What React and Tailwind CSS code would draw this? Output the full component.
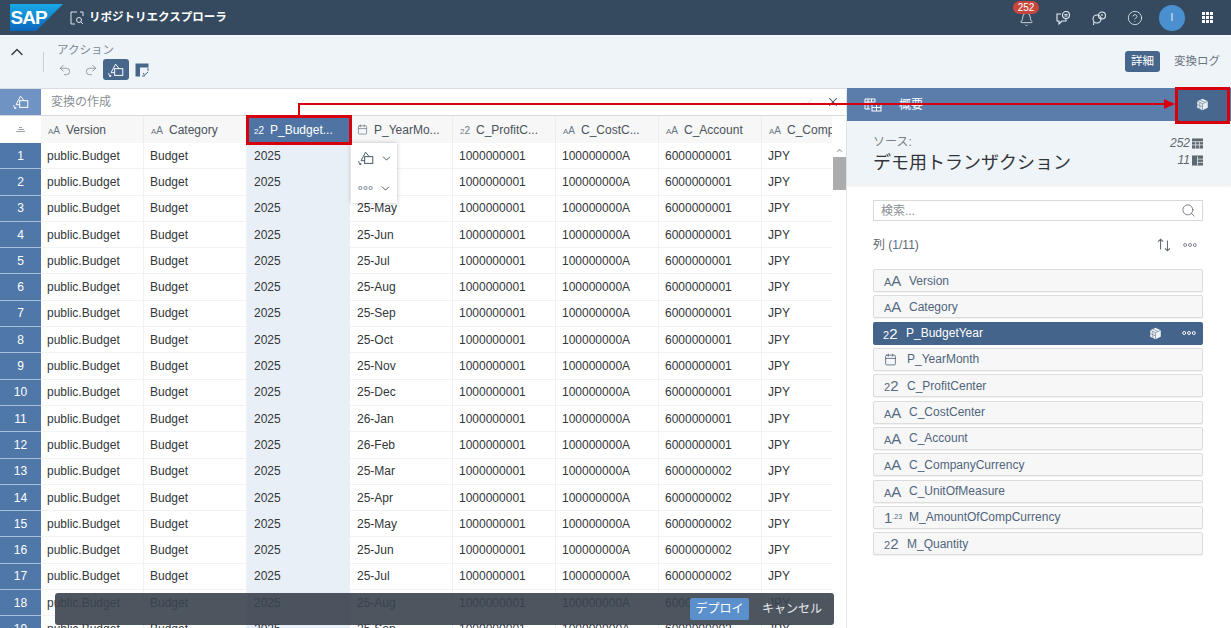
import React from 'react';
import { Bell, Calendar, Check, ChevronDown, ChevronUp, CircleHelp, Redo2, Search, Undo2, X } from 'lucide-react';

const months = ['25-Mar', '25-Apr', '25-May', '25-Jun', '25-Jul', '25-Aug', '25-Sep', '25-Oct', '25-Nov', '25-Dec', '26-Jan', '26-Feb', '25-Mar', '25-Apr', '25-May', '25-Jun', '25-Jul', '25-Aug', '25-Sep'];

const headers = [
    { type: 'text', label: 'Version' },
    { type: 'text', label: 'Category' },
    { type: 'int', label: 'P_Budget...', active: true },
    { type: 'date', label: 'P_YearMo...' },
    { type: 'int', label: 'C_ProfitC...' },
    { type: 'text', label: 'C_CostC...' },
    { type: 'text', label: 'C_Account' },
    { type: 'text', label: 'C_Compa...' },
];

const columns = [
    { type: 'text', label: 'Version' },
    { type: 'text', label: 'Category' },
    { type: 'int', label: 'P_BudgetYear', active: true },
    { type: 'date', label: 'P_YearMonth' },
    { type: 'int', label: 'C_ProfitCenter' },
    { type: 'text', label: 'C_CostCenter' },
    { type: 'text', label: 'C_Account' },
    { type: 'text', label: 'C_CompanyCurrency' },
    { type: 'text', label: 'C_UnitOfMeasure' },
    { type: 'num', label: 'M_AmountOfCompCurrency' },
    { type: 'int', label: 'M_Quantity' },
];

const TransformIcon = ({ className }) => (
    <svg viewBox="0 0 20 20" fill="none" stroke="currentColor" strokeWidth="1.1" className={className}>
        <rect x="8.5" y="8.5" width="9" height="7.5" />
        <path d="M8.5 13 H4.5 L9.5 3.5 L13.5 8.5" />
        <path d="M2 13.5 C1.8 15 2.5 16.3 4 17 M2.4 16.8 L4.2 17.2 L4.2 15.4" />
    </svg>
);

const CubeIcon = ({ className }) => (
    <svg viewBox="0 0 16 16" className={className}>
        <path d="M8 1 L14.5 4 V12 L8 15 L1.5 12 V4 Z" fill="currentColor" />
        <path d="M1.5 4 L8 7 L14.5 4 M8 7 V15 M4.7 2.5 L11.2 5.5 M4.7 5.5 V13.5 M1.5 8 L8 11" stroke="#5a6d84" strokeWidth="0.7" fill="none" />
    </svg>
);

const Dots = ({ className }) => (
    <svg viewBox="0 0 16 6" fill="none" stroke="currentColor" strokeWidth="1.1" className={className}>
        <circle cx="2.5" cy="3" r="1.7" />
        <circle cx="8" cy="3" r="1.7" />
        <circle cx="13.5" cy="3" r="1.7" />
    </svg>
);

const SapLogo = () => (
    <svg viewBox="0 0 53 27" className="w-[53px] h-[27px]">
        <defs>
            <linearGradient id="sap" x1="0" y1="0" x2="0" y2="1">
                <stop offset="0" stopColor="#19a9e6" />
                <stop offset="1" stopColor="#0a66bd" />
            </linearGradient>
        </defs>
        <path d="M0 0 H53 L26 27 H0 Z" fill="url(#sap)" />
        <text x="0.5" y="20" fill="#fff" fontSize="19" fontWeight="700" fontFamily="Liberation Sans, sans-serif" letterSpacing="-1">SAP</text>
    </svg>
);

const TypeMark = ({ type, large }) => {
    if (type === 'date') return <Calendar className={large ? 'w-[13px] h-[13px]' : 'w-[11px] h-[11px]'} strokeWidth={1.6} />;
    if (type === 'num') return <span className="text-[15px] leading-none">1<sup className="text-[7px]">.23</sup></span>;
    if (type === 'int') return <span className={large ? 'text-[15px] leading-none' : 'text-[10px] leading-none'}><span className={large ? 'text-[11px]' : 'text-[8px]'}>2</span>2</span>;
    return <span className={large ? 'text-[15px] leading-none' : 'text-[10px] leading-none'}><span className={large ? 'text-[11px]' : 'text-[8px]'}>A</span>A</span>;
};

const Row = ({ n, month }) => (
    <div className="flex h-[26.3px] shrink-0 text-[12px] text-[#32363a]">
        <div className="w-[41px] shrink-0 bg-[#4f78a8] border-b border-[#a9c1de] flex items-center justify-center text-white">{n}</div>
        <div className="w-[103px] shrink-0 border-r border-b border-[#f0f2f4] px-[6px] flex items-center">public.Budget</div>
        <div className="w-[103px] shrink-0 border-r border-b border-[#f0f2f4] px-[6px] flex items-center">Budget</div>
        <div className="w-[103px] shrink-0 bg-[#e9eff6] border-b border-[#e9eff6] px-[7px] flex items-center">2025</div>
        <div className="w-[103px] shrink-0 border-r border-b border-[#f0f2f4] px-[7px] flex items-center">{month}</div>
        <div className="w-[103px] shrink-0 border-r border-b border-[#f0f2f4] px-[6px] flex items-center">1000000001</div>
        <div className="w-[103px] shrink-0 border-r border-b border-[#f0f2f4] px-[6px] flex items-center">100000000A</div>
        <div className="w-[103px] shrink-0 border-r border-b border-[#f0f2f4] px-[6px] flex items-center">{n > 12 ? '6000000002' : '6000000001'}</div>
        <div className="w-[70px] shrink-0 border-b border-[#f0f2f4] px-[6px] flex items-center">JPY</div>
    </div>
);

const App = () => {
    return (
        <div className="relative w-[1231px] h-[628px] overflow-hidden bg-white flex flex-col font-['Liberation_Sans','Noto_Sans_CJK_JP',sans-serif]">
            {/* Shell bar */}
            <div className="h-[35px] shrink-0 bg-[#354a5f] flex items-center pl-[10px] pr-[18px] text-white">
                <SapLogo />
                <svg viewBox="0 0 14 14" fill="none" stroke="#dfe5ec" strokeWidth="1" className="w-[14px] h-[14px] ml-[7px]">
                    <path d="M7 1 H1 V13 H5 M10 1 H13 V5" />
                    <circle cx="9" cy="9" r="2.5" />
                    <path d="M11 11 L13 13" />
                </svg>
                <span className="ml-[5px] text-[11.5px] font-semibold">リポジトリエクスプローラ</span>
                <div className="ml-auto flex items-center text-[#e8edf3]">
                    <div className="relative w-[16px] flex justify-center">
                        <Bell className="w-[15px] h-[15px] translate-y-[2px]" strokeWidth={1.3} />
                        <span className="absolute -top-[9px] left-[-5px] w-[26px] h-[13px] rounded-full bg-[#c8473c] text-white text-[10px] leading-[13px] text-center">252</span>
                    </div>
                    <svg viewBox="0 0 16 16" fill="none" stroke="currentColor" strokeWidth="1.1" className="w-[16px] h-[16px] ml-[21px]">
                        <path d="M6 4 H2 V11 H4 V14 L7 11 H11 V9" />
                        <circle cx="11" cy="5" r="3.5" />
                        <path d="M9.5 4.5 H12.5 M9.5 6 H12.5" />
                    </svg>
                    <svg viewBox="0 0 16 16" fill="none" stroke="currentColor" strokeWidth="1.1" className="w-[16px] h-[16px] ml-[20px]">
                        <circle cx="6" cy="9" r="4" />
                        <circle cx="11" cy="5.5" r="3.5" />
                        <path d="M3 12 L2.5 15 M11 4 V6 M11 7 V7.5" />
                    </svg>
                    <CircleHelp className="w-[16px] h-[16px] ml-[20px]" strokeWidth={1.2} />
                    <div className="w-[26px] h-[26px] rounded-full bg-[#4a90d0] ml-[16px] flex items-center justify-center text-[10px]">I</div>
                    <div className="grid grid-cols-3 gap-[1px] ml-[17px]">
                        {Array.from({ length: 9 }).map((_, i) => <span key={i} className="w-[3px] h-[3px] bg-white" />)}
                    </div>
                </div>
            </div>

            {/* Action toolbar */}
            <div className="h-[53px] shrink-0 bg-[#eff4f9] border-t border-[#f7f9fb] flex items-start">
                <ChevronUp className="w-[20px] h-[20px] text-[#32363a] mt-[6px] ml-[7px]" strokeWidth={1.6} />
                <div className="w-px h-[20px] bg-[#c9d0d8] mt-[16px] ml-[16px]" />
                <div className="ml-[13px] mt-[6px]">
                    <div className="text-[11.5px] leading-[16px] text-[#7c8792]">アクション</div>
                    <div className="flex items-center mt-[1px]">
                        <Undo2 className="w-[14px] h-[14px] text-[#7f8b98] ml-[1px]" strokeWidth={1.4} />
                        <Redo2 className="w-[14px] h-[14px] text-[#7f8b98] ml-[12px]" strokeWidth={1.4} />
                        <div className="w-[26px] h-[21px] rounded-[3px] bg-[#46668c] ml-[5px] flex items-center justify-center text-white">
                            <TransformIcon className="w-[18px] h-[18px]" />
                        </div>
                        <svg viewBox="0 0 14 14" className="w-[14px] h-[14px] ml-[6px]">
                            <rect x="0.5" y="0.5" width="4.5" height="13" fill="#46668c" />
                            <rect x="5" y="0.5" width="8.5" height="4" fill="#46668c" />
                            <path d="M13 5 V8 M7 13 H10 M8 10 L9.5 12 L13 9" fill="none" stroke="#46668c" strokeWidth="1" />
                        </svg>
                    </div>
                </div>
                <div className="ml-auto mt-[15px] mr-[11px] flex items-center text-[11.5px]">
                    <span className="w-[35px] h-[21px] rounded-[3px] bg-[#46668c] text-white flex items-center justify-center">詳細</span>
                    <span className="ml-[14px] text-[#6a7580]">変換ログ</span>
                </div>
            </div>

            <div className="flex flex-1 min-h-0">
                {/* Data grid */}
                <div className="relative w-[846px] shrink-0 flex flex-col overflow-hidden border-t border-[#d8dde3]">
                    <div className="h-[27px] shrink-0 flex items-center border-b border-[#d9d9d9]">
                        <div className="w-[41px] h-full bg-[#6f94c4] flex items-center justify-center text-white">
                            <TransformIcon className="w-[18px] h-[18px]" />
                        </div>
                        <span className="ml-[10px] text-[12px] text-[#8a8f95]">変換の作成</span>
                        <Check className="w-[13px] h-[13px] ml-auto text-[#c5cbd2]" strokeWidth={1.2} />
                        <X className="w-[14px] h-[14px] ml-[12px] mr-[6px] text-[#3f4d5c]" strokeWidth={1.8} />
                    </div>
                    <div className="flex h-[27px] shrink-0 text-[12px] text-[#4a525a]">
                        <div className="w-[41px] shrink-0 flex flex-col items-center justify-center gap-[1px]">
                            <span className="w-[3px] h-px bg-[#9aa3ad]" />
                            <span className="w-[6px] h-px bg-[#9aa3ad]" />
                            <span className="w-[9px] h-px bg-[#9aa3ad]" />
                        </div>
                        {headers.map((h) => (
                            <div key={h.label} className={`w-[103px] shrink-0 flex items-center gap-[6px] pl-[7px] whitespace-nowrap ${h.active ? 'bg-[#4f74a4] text-white' : 'bg-[#f7f7f7] border-r border-[#ececec]'}`}>
                                <span className={h.active ? 'text-white' : 'text-[#6a7886]'}><TypeMark type={h.type} /></span>
                                {h.label}
                            </div>
                        ))}
                    </div>
                    {months.map((m, i) => <Row key={i} n={i + 1} month={m} />)}

                    {/* Grid scrollbar */}
                    <div className="absolute right-0 top-[27px] bottom-0 w-[14px] bg-white flex flex-col items-center">
                        <ChevronUp className="w-[9px] h-[9px] mt-[30px] text-[#b5b5b5]" strokeWidth={3} />
                        <div className="w-[13px] h-[33px] bg-[#acacac] mt-[2px]" />
                    </div>

                    {/* Column popover */}
                    <div className="absolute left-[351px] top-[54px] w-[46px] h-[60px] bg-white shadow-[0_0_4px_rgba(0,0,0,0.25)] flex flex-col text-[#46586c]">
                        <div className="flex-1 flex items-center pl-[6px] gap-[5px]">
                            <TransformIcon className="w-[18px] h-[18px]" />
                            <ChevronDown className="w-[13px] h-[13px]" strokeWidth={1.8} />
                        </div>
                        <div className="flex-1 flex items-center pl-[7px] gap-[6px]">
                            <Dots className="w-[15px] h-[6px] text-[#8b95a1]" />
                            <ChevronDown className="w-[13px] h-[13px]" strokeWidth={1.8} />
                        </div>
                    </div>

                    {/* Deploy toast */}
                    <div className="absolute left-[55px] top-[504px] w-[779px] h-[32px] rounded-[3px] bg-[#3a424e]/90 flex items-center justify-end pr-[5px] text-[12px] text-[#e6e9ed]">
                        <span className="w-[59px] h-[22px] rounded-[2px] bg-[#5a90cc] text-white flex items-center justify-center">デプロイ</span>
                        <span className="ml-[13px] mr-[7px]">キャンセル</span>
                    </div>
                </div>

                {/* Source panel */}
                <div className="flex-1 flex flex-col border-l border-[#e4e7ea]">
                    <div className="h-[33px] shrink-0 bg-[#5a7dab] flex items-stretch text-white">
                        <svg viewBox="0 0 18 14" fill="none" stroke="currentColor" strokeWidth="1" className="w-[18px] h-[14px] ml-[17px] self-center">
                            <path d="M1 1 H11 V4 H1 Z M1 4 V11 H6 M4 1 V11 M7.5 1 V4" />
                            <rect x="8" y="6" width="9" height="7" />
                            <path d="M8 9.5 H17 M12.5 6 V13" />
                        </svg>
                        <span className="ml-[17px] text-[12px] self-center leading-[14px]">概要</span>
                        <div className="ml-auto w-[54px] mr-[2px] bg-[#47678f] flex items-center justify-center">
                            <CubeIcon className="w-[13px] h-[13px] text-[#e8edf3]" />
                        </div>
                    </div>
                    <div className="h-[64px] shrink-0 bg-[#eff4f9] flex pl-[26px] pr-[28px] shadow-[0_1px_2px_rgba(0,0,0,0.08)]">
                        <div className="flex-1 pt-[13px]">
                            <div className="text-[12px] leading-[16px] text-[#7a8189]">ソース:</div>
                            <div className="text-[18px] leading-[24px] mt-[1px] text-[#32363a]">デモ用トランザクション</div>
                        </div>
                        <div className="pt-[15px] text-[12px] italic text-[#5f6770] flex flex-col items-end gap-[3px] leading-[14px]">
                            <div className="flex items-center gap-[2px]">252
                                <svg viewBox="0 0 12 11" className="w-[11px] h-[11px]"><rect width="12" height="11" fill="#5f6770" /><path d="M0 3.5 H12 M0 7 H12 M4 3.5 V11 M8 3.5 V11" stroke="#eff4f9" strokeWidth="0.8" /></svg>
                            </div>
                            <div className="flex items-center gap-[2px]">11
                                <svg viewBox="0 0 12 11" className="w-[11px] h-[11px]"><rect width="12" height="11" fill="#5f6770" /><path d="M6 1 V11 M6 4 H12 M6 7.5 H12" stroke="#eff4f9" strokeWidth="0.8" /></svg>
                            </div>
                        </div>
                    </div>
                    <div className="pt-[15px] pl-[26px] pr-[28px]">
                        <div className="h-[21px] border border-[#d9d9d9] bg-white flex items-center px-[7px] text-[12px] text-[#8a8f95]">
                            検索...
                            <Search className="w-[15px] h-[15px] ml-auto text-[#5f6770] -mr-[1px]" strokeWidth={1.3} />
                        </div>
                        <div className="flex items-center h-[18px] mt-[15px] text-[12px] text-[#5f6770]">
                            <span>列 (<span className="text-[#4f74a4]">1</span>/11)</span>
                            <svg viewBox="0 0 14 14" fill="none" stroke="currentColor" strokeWidth="0.9" className="w-[16px] h-[16px] ml-auto">
                                <path d="M4 11 V2 M1.8 4 L4 2 L6.2 4 M10 3 V12 M7.8 10 L10 12 L12.2 10" />
                            </svg>
                            <Dots className="w-[14px] h-[6px] ml-[11px] mr-[6px] text-[#7a8189]" />
                        </div>
                        <div className="flex flex-col gap-[3.33px] mt-[15px]">
                            {columns.map((c) => (
                                <div key={c.label} className={`h-[23px] rounded-[2px] flex items-center text-[12px] ${c.active ? 'bg-[#44648c] text-white' : 'bg-[#f7f7f7] border border-[#dcdcdc] shadow-[0_1px_1px_rgba(0,0,0,0.06)] text-[#50657c]'}`}>
                                    <span className={`ml-[10px] flex justify-start ${c.type === 'text' || c.type === 'num' ? 'w-[25px]' : 'w-[23px]'} ${c.active ? 'text-white' : 'text-[#566b82]'}`}><TypeMark type={c.type} large /></span>
                                    <span>{c.label}</span>
                                    {c.active && <CubeIcon className="w-[13px] h-[13px] ml-auto text-[#eef2f6]" />}
                                    {c.active && <Dots className="w-[14px] h-[6px] ml-[20px] mr-[7px] text-white" />}
                                </div>
                            ))}
                        </div>
                    </div>
                </div>
            </div>

            {/* Red annotations */}
            <div className="absolute left-[246px] top-[115px] w-[106px] h-[30px] border-[3px] border-[#d9000d] pointer-events-none" />
            <div className="absolute left-[1175px] top-[87px] w-[55px] h-[37px] border-[3px] border-[#d9000d] pointer-events-none" />
            <svg width="1231" height="628" className="absolute left-0 top-0 pointer-events-none">
                <path d="M299 115 V104 H1165" fill="none" stroke="#d9000d" strokeWidth="2" />
                <path d="M1164 99 L1175 104 L1164 109 Z" fill="#d9000d" />
            </svg>
        </div>
    );
};

export default App;
